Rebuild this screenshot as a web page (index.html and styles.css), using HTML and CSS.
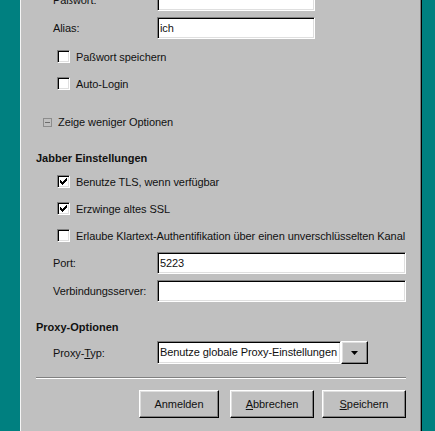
FILE: index.html
```html
<!DOCTYPE html>
<html lang="de">
<head>
    <meta charset="UTF-8">
    <title>Konto bearbeiten</title>
    <link rel="stylesheet" href="styles.css">
</head>
<body>
    <div class="desktop">
        <div class="window">
            <div class="content">
                <div class="field-row first">
                    <span class="label">Paßwort:</span>
                    <div class="input short"></div>
                </div>
                <div class="field-row">
                    <span class="label">Alias:</span>
                    <div class="input short">ich</div>
                </div>

                <div class="check-row"><span class="checkbox"></span>Paßwort speichern</div>
                <div class="check-row"><span class="checkbox"></span>Auto-Login</div>

                <div class="toggle-row">
                    <svg class="toggle-icon" width="9" height="9" viewBox="0 0 9 9">
                        <rect x="0.5" y="0.5" width="8" height="8" fill="none" stroke="#8c8c8c"/>
                        <line x1="2" y1="4.5" x2="7" y2="4.5" stroke="#6c6c6c"/>
                    </svg>
                    Zeige weniger Optionen
                </div>

                <div class="section-title jabber">Jabber Einstellungen</div>
                <div class="check-row"><span class="checkbox checked"><svg width="7" height="7" viewBox="0 0 7 7"><path d="M0 2h1v1h1v1h1v-1h1v-1h1v-1h1v-1h1v3h-1v1h-1v1h-1v1h-1v1h-1v-1h-1v-1h-1z" fill="#000"/></svg></span>Benutze TLS, wenn verfügbar</div>
                <div class="check-row"><span class="checkbox checked"><svg width="7" height="7" viewBox="0 0 7 7"><path d="M0 2h1v1h1v1h1v-1h1v-1h1v-1h1v-1h1v3h-1v1h-1v1h-1v1h-1v1h-1v-1h-1v-1h-1z" fill="#000"/></svg></span>Erzwinge altes SSL</div>
                <div class="check-row"><span class="checkbox"></span>Erlaube Klartext-Authentifikation über einen unverschlüsselten Kanal</div>

                <div class="field-row port">
                    <span class="label">Port:</span>
                    <div class="input wide">5223</div>
                </div>
                <div class="field-row">
                    <span class="label">Verbindungsserver:</span>
                    <div class="input wide"></div>
                </div>

                <div class="section-title proxy">Proxy-Optionen</div>
                <div class="field-row combo-row">
                    <span class="label">Proxy-<u>T</u>yp:</span>
                    <div class="combo">
                        <div class="input combo-text">Benutze globale Proxy-Einstellungen</div>
                        <div class="combo-button">
                            <svg width="7" height="4" viewBox="0 0 7 4"><path d="M0 0h7l-3.5 4z" fill="#000"/></svg>
                        </div>
                    </div>
                </div>

                <div class="separator"></div>

                <div class="buttons">
                    <div class="button">Anmelden</div>
                    <div class="button"><u>A</u>bbrechen</div>
                    <div class="button"><u>S</u>peichern</div>
                </div>
            </div>
        </div>
    </div>
</body>
</html>
```

FILE: styles.css
```css
/* Desktop and window frame */
body {
    margin: 0;
    font-family: "Liberation Sans", Arial, sans-serif;
    font-size: 11px;
    letter-spacing: -0.08px;
    color: #111;
}

.desktop {
    height: 431px;
    overflow: hidden;
    background-color: #008080;
    display: flex;
    padding-left: 20px;
    padding-right: 13px;
}

.window {
    flex-grow: 1;
    background-color: #c0c0c0;
    border-left: 1px solid #f4f4f4;
    border-right: 1px solid #000;
    box-shadow: inset -1px 0 0 #808080;
    overflow: hidden;
}

.content {
    padding-left: 15px;
    width: 370px;
}

/* Label + input rows */
.field-row {
    display: flex;
    align-items: center;
    height: 22px;
    margin-top: 6px;
}

.field-row.first {
    margin-top: -11px;
}

.field-row.port {
    margin-top: 3px;
}

.label {
    width: 121px;
    padding-left: 17px;
    box-sizing: border-box;
    flex-shrink: 0;
}

.input {
    height: 22px;
    box-sizing: border-box;
    background-color: #fff;
    border-top: 1px solid #808080;
    border-left: 1px solid #808080;
    border-bottom: 1px solid #fff;
    border-right: 1px solid #fff;
    box-shadow: inset 1px 1px 0 #000, inset -1px -1px 0 #dfdfdf;
    padding: 0 2px;
    line-height: 20px;
    white-space: nowrap;
    overflow: hidden;
}

.input.short {
    width: 158px;
}

.input.wide {
    width: 250px;
}

/* Checkboxes */
.check-row {
    display: flex;
    align-items: center;
    height: 27px;
    padding-left: 21px;
    white-space: nowrap;
}

.field-row + .check-row {
    margin-top: 4px;
}

.checkbox {
    width: 13px;
    height: 13px;
    box-sizing: border-box;
    background-color: #fff;
    border-top: 1px solid #808080;
    border-left: 1px solid #808080;
    border-bottom: 1px solid #fff;
    border-right: 1px solid #fff;
    box-shadow: inset 1px 1px 0 #000, inset -1px -1px 0 #dfdfdf;
    margin-right: 6px;
    display: flex;
    align-items: center;
    justify-content: center;
    flex-shrink: 0;
}

.checkbox svg {
    display: block;
}

/* Expand / collapse */
.toggle-row {
    display: flex;
    align-items: center;
    height: 20px;
    margin-top: 15px;
    padding-left: 7px;
}

.toggle-icon {
    margin-right: 6px;
}

/* Section titles */
.section-title {
    font-weight: bold;
    letter-spacing: 0;
    height: 20px;
    line-height: 20px;
}

.section-title.jabber {
    margin-top: 16px;
}

.section-title.proxy {
    margin-top: 15px;
}

/* Combo box */
.field-row.combo-row {
    margin-top: 4px;
    height: 23px;
}

.combo {
    display: flex;
}

.combo-text {
    width: 184px;
    height: 23px;
    line-height: 21px;
}

.combo-button {
    width: 27px;
    height: 23px;
    box-sizing: border-box;
    background-color: #c0c0c0;
    border-top: 1px solid #fff;
    border-left: 1px solid #fff;
    border-right: 1px solid #000;
    border-bottom: 1px solid #000;
    box-shadow: inset -1px -1px 0 #808080, inset 1px 1px 0 #dfdfdf;
    display: flex;
    align-items: center;
    justify-content: center;
}

/* Bottom separator and buttons */
.separator {
    margin-top: 13px;
    height: 1px;
    border-top: 1px solid #808080;
    background-color: #fff;
    width: 370px;
}

.buttons {
    display: flex;
    justify-content: flex-end;
    gap: 8px;
    margin-top: 11px;
}

.button {
    width: 84px;
    height: 28px;
    box-sizing: border-box;
    border-top: 1px solid #fff;
    border-left: 1px solid #fff;
    border-right: 1px solid #000;
    border-bottom: 1px solid #000;
    box-shadow: inset -1px -1px 0 #808080, inset 1px 1px 0 #dfdfdf;
    display: flex;
    align-items: center;
    justify-content: center;
}

.button:first-child {
    width: 80px;
    margin-right: 3px;
}
```
